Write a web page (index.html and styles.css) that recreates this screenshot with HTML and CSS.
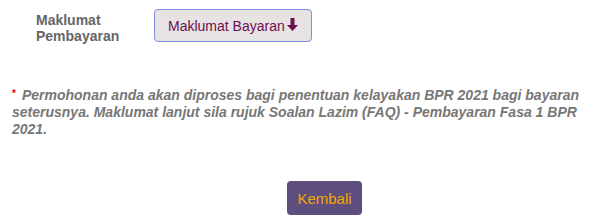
FILE: index.html
```html
<!DOCTYPE html>
<html lang="en">
<head>
  <meta charset="UTF-8">
  <meta name="viewport" content="width=device-width, initial-scale=1.0">
  <title>Maklumat Pembayaran</title>
  <link rel="stylesheet" href="styles.css">
</head>
<body>
  <div class="payment-container">
    <div class="form-row">
      <label class="field-label">Maklumat Pembayaran</label>
      <button type="button" class="btn-info">
        Maklumat Bayaran
        <svg class="icon-down" width="11" height="13" viewBox="0 0 11 13">
          <path d="M3.5 0h4v7h3.5l-5.5 6l-5.5-6h3.5z" fill="currentColor"/>
        </svg>
      </button>
    </div>

    <p class="note">
      <span class="required">*</span>Permohonan anda akan diproses bagi penentuan kelayakan BPR 2021 bagi bayaran seterusnya. Maklumat lanjut sila rujuk Soalan Lazim (FAQ) - Pembayaran Fasa 1 BPR 2021.
    </p>

    <div class="form-actions">
      <button type="button" class="btn-back">Kembali</button>
    </div>
  </div>
</body>
</html>
```

FILE: styles.css
```css
:root {
  --text-muted: #666;
  --note: #777;
  --purple: #6b0f4f;
  --btn-bg: #e7e3e3;
  --btn-border: #7d8fdc;
  --back-bg: #5d4e7e;
  --back-text: #f5a800;
}

* {
  margin: 0;
  padding: 0;
  box-sizing: border-box;
  font-family: 'Liberation Sans', Arial, Helvetica, sans-serif;
}

body {
  background: #fff;
}

.payment-container {
  width: 606px;
  padding-top: 9px;
}

.form-row {
  display: flex;
  align-items: flex-start;
  padding-left: 36px;
}

.field-label {
  width: 118px;
  padding-top: 3px;
  font-size: 14px;
  line-height: 16px;
  font-weight: bold;
  color: var(--text-muted);
}

.btn-info {
  display: flex;
  align-items: center;
  gap: 2px;
  height: 33px;
  padding: 0 13px 0 13px;
  background: var(--btn-bg);
  border: 1px solid var(--btn-border);
  border-radius: 4px;
  color: var(--purple);
  font-size: 14px;
  cursor: pointer;
}

.icon-down {
  display: block;
  margin-top: -2px;
}

.note {
  margin-top: 43px;
  padding: 0 12px;
  font-size: 14px;
  line-height: 17px;
  font-weight: bold;
  font-style: italic;
  color: var(--note);
}

.required {
  margin-right: 6px;
  color: #e00;
  font-size: 10px;
  line-height: 10px;
  vertical-align: 3px;
  font-style: normal;
}

.form-actions {
  display: flex;
  justify-content: center;
  padding-left: 43px;
  margin-top: 43px;
}

.btn-back {
  width: 75px;
  height: 34px;
  background: var(--back-bg);
  border: none;
  border-radius: 4px;
  color: var(--back-text);
  font-size: 15px;
  cursor: pointer;
}
```
